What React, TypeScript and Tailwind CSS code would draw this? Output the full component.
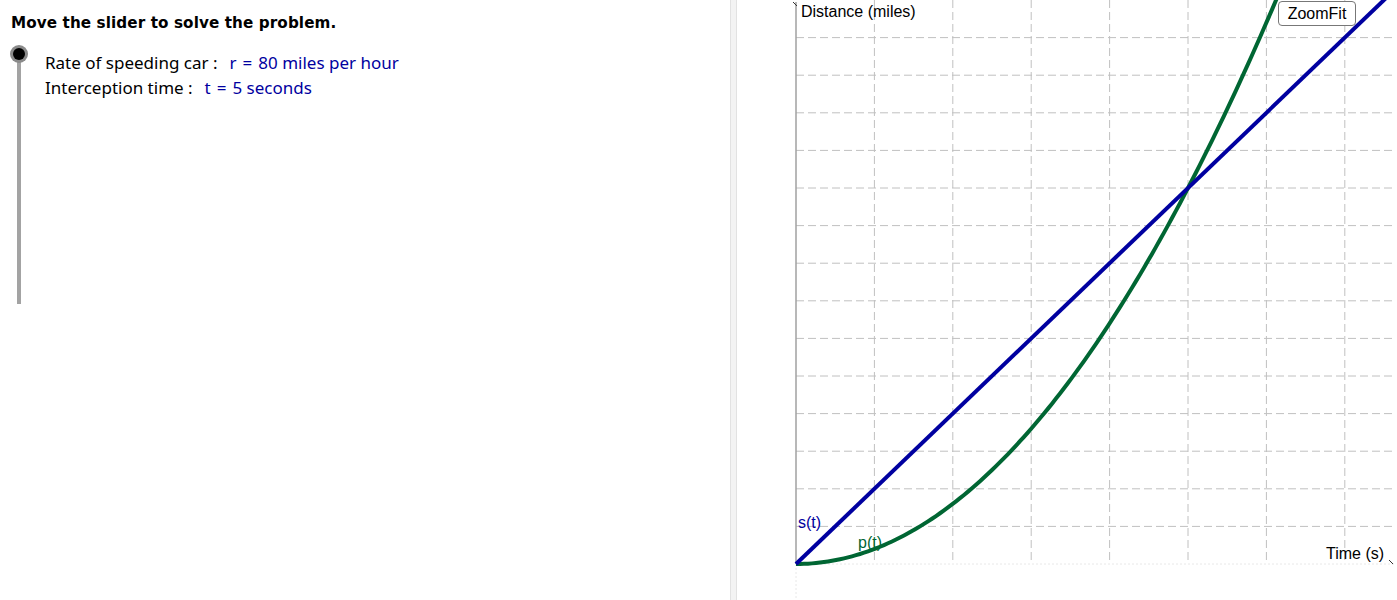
import React from 'react';

const OX = 59;
const OY = 564;
const SX = 78.4;
const SY = 37.6;

function Graph() {
  const vlines = [1, 2, 3, 4, 5, 6, 7].map((i) => OX + SX * i);
  const hlines = Array.from({ length: 14 }, (_, j) => OY - SY * (j + 1));
  const k = 376 / (392 * 392);
  const pts: string[] = [];
  for (let dx = 0; dx <= 500; dx += 4) {
    pts.push(`${OX + dx},${OY - k * dx * dx}`);
  }
  return (
    <svg width="659" height="600" className="block">
      {vlines.map((x) => (
        <line key={x} x1={x} y1={0} x2={x} y2={OY} stroke="#c0c0c0" strokeWidth="1" strokeDasharray="8 4" />
      ))}
      {hlines.map((y) => (
        <line key={y} x1={OX} y1={y} x2={659} y2={y} stroke="#c0c0c0" strokeWidth="1" strokeDasharray="8 4" />
      ))}
      <line x1={OX} y1={OY} x2={659} y2={OY} stroke="#e8e8e8" strokeWidth="1" strokeDasharray="2 2" />
      <line x1={OX} y1={OY} x2={OX} y2={600} stroke="#e8e8e8" strokeWidth="1" strokeDasharray="2 2" />
      <line x1={OX} y1={2} x2={OX} y2={OY} stroke="#a0a0a0" strokeWidth="1.5" />
      <line x1={OX - 3} y1={2} x2={OX + 1} y2={6} stroke="#333" strokeWidth="1" />
      <line x1={652} y1={560} x2={656} y2={564} stroke="#333" strokeWidth="1" />
      <polyline points={pts.join(' ')} fill="none" stroke="#006633" strokeWidth="4" strokeLinejoin="round" />
      <line x1={OX} y1={OY} x2={OX + 620} y2={OY - (376 / 392) * 620} stroke="#0000a0" strokeWidth="4" />
    </svg>
  );
}

function Slider() {
  return (
    <div className="w-[45px] shrink-0 flex flex-col items-center pr-[7px] pt-[1px]">
      <div className="w-[18px] h-[18px] rounded-full bg-[#8a8a8a] flex items-center justify-center z-10">
        <div className="w-[12px] h-[12px] rounded-full bg-black" />
      </div>
      <div className="w-[4px] h-[243px] -mt-[2px] bg-[#a3a3a3]" />
    </div>
  );
}

export default function App() {
  return (
    <div className="flex w-[1397px] h-[600px] bg-white overflow-hidden">
      <div className="w-[730px] shrink-0 flex flex-col">
        <div className="pt-[14px] pl-[11px] text-[15.2px] font-bold text-black font-['DejaVu_Sans',sans-serif] leading-[18px] tracking-[0.1px]">
          Move the slider to solve the problem.
        </div>
        <div className="flex mt-[12px]">
          <Slider />
          <div className="font-['Noto_Sans',sans-serif] text-[17px] leading-[25px] text-black mt-[6px]">
            <div>
              Rate of speeding car :<span className="ml-[12px] text-[#0000a0]">r<span className="mx-[6px]">=</span>80 miles per hour</span>
            </div>
            <div>
              Interception time :<span className="ml-[12px] text-[#0000a0]">t<span className="mx-[6px]">=</span>5 seconds</span>
            </div>
          </div>
        </div>
      </div>
      <div className="w-[7px] shrink-0 bg-[#f3f3f3] border-l border-r border-[#e2e2e2]" />
      <div className="flex-1 relative">
        <Graph />
        <div className="absolute left-[64px] top-[3px] text-[16px] leading-[18px] font-['Liberation_Sans',sans-serif] text-black">
          Distance (miles)
        </div>
        <div className="absolute left-[61px] top-[514px] text-[16px] leading-[18px] font-['Liberation_Sans',sans-serif] text-[#0000a0]">
          s(t)
        </div>
        <div className="absolute left-[121px] top-[534px] text-[16px] leading-[18px] font-['Liberation_Sans',sans-serif] text-[#006633]">
          p(t)
        </div>
        <div className="absolute left-[589px] top-[545px] text-[16px] leading-[18px] font-['Liberation_Sans',sans-serif] text-black">
          Time (s)
        </div>
        <div className="absolute left-[541px] top-[1px] w-[78px] h-[25px] border border-[#777] rounded-[4px] bg-white flex items-center justify-center text-[16px] font-['Liberation_Sans',sans-serif] text-black">
          ZoomFit
        </div>
      </div>
    </div>
  );
}
